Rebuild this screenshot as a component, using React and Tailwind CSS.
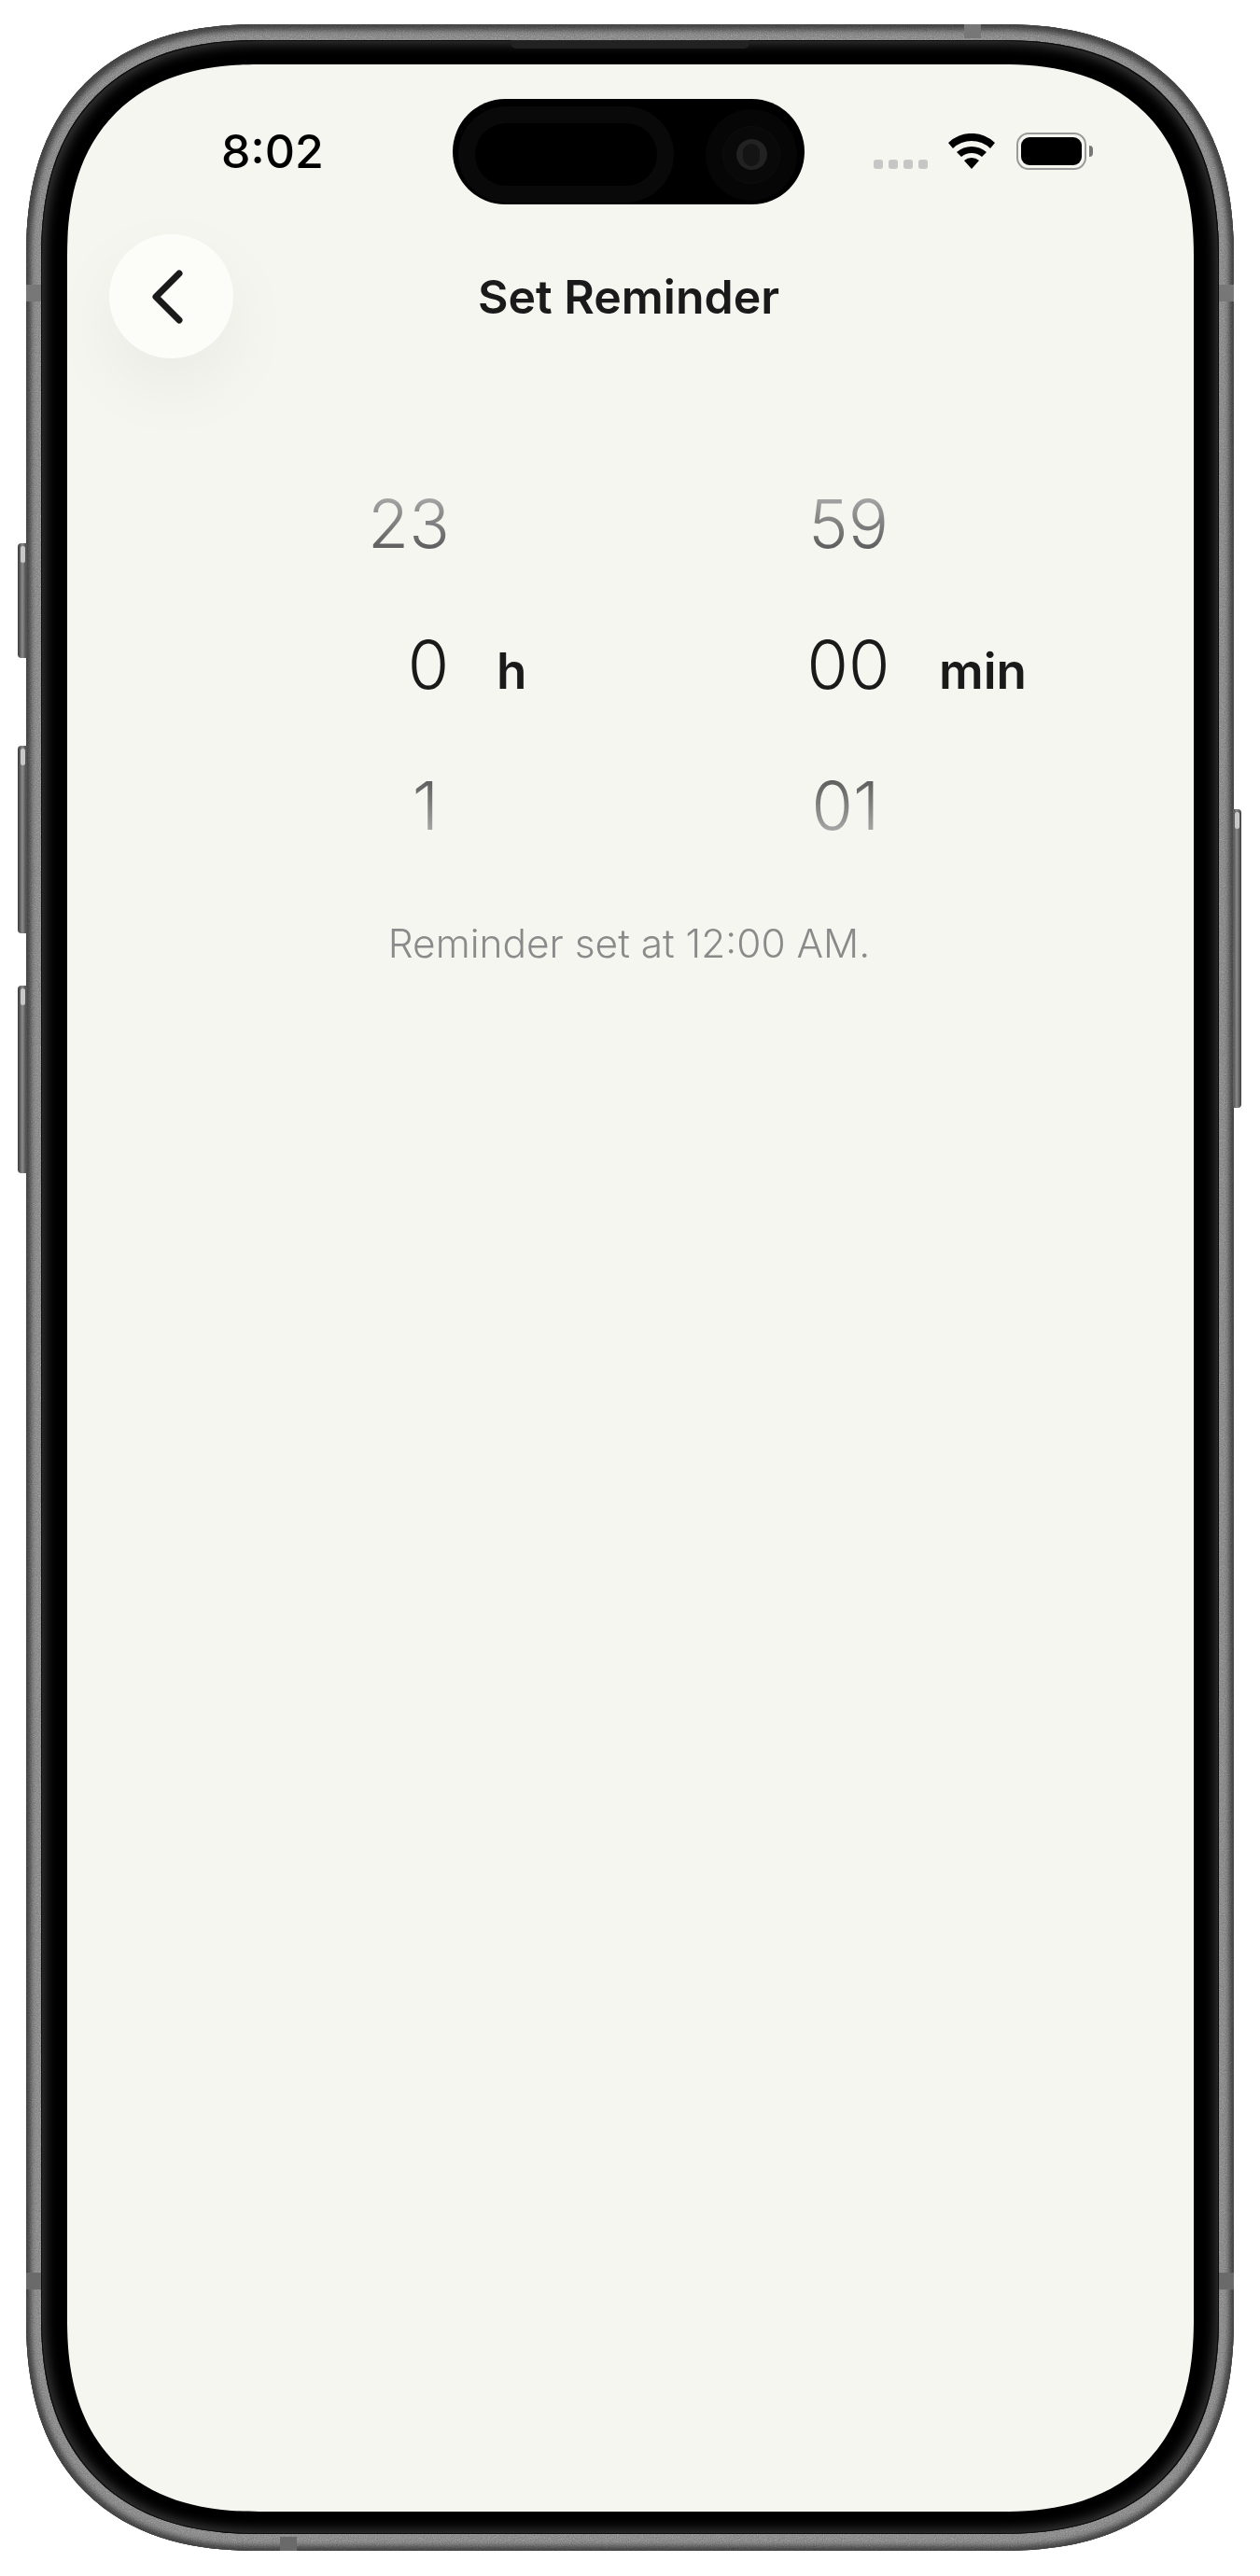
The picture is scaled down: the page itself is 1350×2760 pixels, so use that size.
const hours = [
  { value: '23', fade: 'from-[#bcbcbc] to-[#4a4a4a]', shift: '-ml-[21px]' },
  { value: '0', fade: 'from-[#1a1a1a] to-[#1a1a1a]', unit: 'h' },
  { value: '1', fade: 'from-[#4a4a4a] to-[#bcbcbc]', shift: '-ml-[3px]' },
]

const minutes = [
  { value: '59', fade: 'from-[#bcbcbc] to-[#4a4a4a]' },
  { value: '00', fade: 'from-[#1a1a1a] to-[#1a1a1a]', unit: 'min' },
  { value: '01', fade: 'from-[#4a4a4a] to-[#bcbcbc]', shift: '-ml-[3px]' },
]

function Wheel({ rows, width }) {
  return (
    <div className={width}>
      {rows.map((row) => (
        <div key={row.value} className="flex h-[151px] items-baseline">
          <span className={`block w-full shrink-0 text-center ${row.shift || ''}`}>
            <span className={`bg-linear-to-b bg-clip-text text-[72px] leading-[151px] font-light text-transparent ${row.fade}`}>
              {row.value}
            </span>
          </span>
          {row.unit && <span className={`text-[53px] font-semibold text-[#1a1a1a] ${row.unit === 'h' ? 'ml-[18px]' : 'ml-[42px]'}`}>{row.unit}</span>}
        </div>
      ))}
    </div>
  )
}

function SideButton({ className }) {
  return (
    <div className={`absolute w-[10px] overflow-hidden bg-linear-to-r from-[#3a3a3a] via-[#8c8c8c] to-[#3f3f3f] ${className}`}>
      <div className="mx-auto mt-[3px] h-[18px] w-[5px] rounded-full bg-[#c8c8c8]" />
    </div>
  )
}

function StatusBar() {
  return (
    <div className="flex h-[182px] items-start pt-[37px]">
      <span className="mt-[31px] ml-[165px] w-[248px] text-[50px] leading-[50px] font-[550] text-black">8:02</span>
      <div className="flex h-[113px] w-[377px] items-center rounded-full bg-black pl-[6px]">
        <div className="mt-[6px] flex h-[103px] w-[231px] items-center justify-center rounded-full bg-[#090909]">
          <div className="h-[67px] w-[195px] rounded-full bg-black" />
        </div>
        <div className="mt-[6px] ml-[34px] flex h-[98px] w-[98px] items-center justify-center rounded-full bg-[#060606]">
          <div className="flex h-[62px] w-[62px] items-center justify-center rounded-full border border-[#0e0e0e] bg-[#090909]">
            <div className="flex h-[33px] w-[33px] items-center justify-center rounded-full bg-[#222222]">
              <div className="h-[24px] w-[18px] rounded-full bg-[#141414]" />
            </div>
          </div>
        </div>
      </div>
      <div className="mt-[65px] ml-[74px] flex gap-[6px]">
        <div className="h-[10px] w-[10px] rounded-[3px] bg-[#c6c6c6]" />
        <div className="h-[10px] w-[10px] rounded-[3px] bg-[#c6c6c6]" />
        <div className="h-[10px] w-[10px] rounded-[3px] bg-[#c6c6c6]" />
        <div className="h-[10px] w-[10px] rounded-[3px] bg-[#c6c6c6]" />
      </div>
      <svg className="mt-[37px] ml-[22px]" width="50" height="38" viewBox="0 0 50 38" fill="black">
        <path d="M0 10A36 36 0 0 1 50 10L45 16A29 29 0 0 0 5 16Z" />
        <path d="M9 20A24 24 0 0 1 41 20L36 25A17 17 0 0 0 14 25Z" />
        <path d="M17 29A12 12 0 0 1 33 29L25 38Z" />
      </svg>
      <div className="mt-[36px] ml-[23px] flex items-center">
        <div className="h-[40px] w-[75px] rounded-[13px] border-[2.5px] border-[#9a9a9a] p-[3px]">
          <div className="h-full w-full rounded-[9px] bg-black" />
        </div>
        <div className="ml-[3px] h-[12px] w-[4px] rounded-r-full bg-[#777777]" />
      </div>
    </div>
  )
}

export default function App() {
  return (
    <div className="h-[2760px] w-[1350px] bg-white pt-[26px] pl-[28px] font-[Inter,sans-serif]">
      <div className="relative h-[2707px] w-[1294px] rounded-[250px] bg-[#7a7a7a] pt-[17px] pr-[16px] pb-[18px] pl-[16px] shadow-[inset_0_0_0_1px_#3c3c3c,inset_0_2px_6px_4px_#3a3a3a,inset_0_-2px_6px_3px_#444444] [corner-shape:superellipse(1.25)]">
        <SideButton className="top-[556px] left-[-9px] h-[123px] rounded-l-[4px]" />
        <SideButton className="top-[773px] left-[-9px] h-[201px] rounded-l-[4px]" />
        <SideButton className="top-[1030px] left-[-9px] h-[201px] rounded-l-[4px]" />
        <SideButton className="top-[841px] right-[-8px] h-[320px] rounded-r-[4px]" />

        {/* metal grain */}
        <svg className="absolute inset-0 h-full w-full rounded-[250px] opacity-70 mix-blend-overlay [corner-shape:superellipse(1.25)]">
          <filter id="grain">
            <feTurbulence type="fractalNoise" baseFrequency="0.9" numOctaves="2" />
            <feColorMatrix type="saturate" values="0" />
          </filter>
          <rect width="100%" height="100%" filter="url(#grain)" />
        </svg>

        {/* antenna bands */}
        <div className="absolute top-[279px] left-0 h-[18px] w-[16px] bg-[#777777]" />
        <div className="absolute top-[279px] right-0 h-[18px] w-[16px] bg-[#777777]" />
        <div className="absolute top-[2409px] left-0 h-[18px] w-[16px] bg-[#6a6a6a]" />
        <div className="absolute top-[2409px] right-0 h-[18px] w-[16px] bg-[#6a6a6a]" />
        <div className="absolute top-0 left-[1005px] h-[15px] w-[18px] bg-[#777777]" />
        <div className="absolute bottom-0 left-[272px] h-[15px] w-[18px] bg-[#6a6a6a]" />

        <div className="relative h-full w-full rounded-[234px] bg-black pt-[26px] pr-[27px] pb-[24px] pl-[28px] shadow-[inset_0_0_0_1px_#0c0c0c,inset_0_0_12px_5px_#333333] [corner-shape:superellipse(1.25)]">
          {/* earpiece */}
          <div className="absolute top-0 left-[503px] h-[9px] w-[256px] rounded-b-[6px] bg-[#222222]" />

          <div className="h-full w-full overflow-hidden rounded-[206px] bg-[#f5f6f0] [corner-shape:superellipse(1.25)]">
            <StatusBar />

            <div className="grid grid-cols-[1fr_auto_1fr] items-center pl-[45px]">
              <div>
                <button className="flex h-[133px] w-[133px] items-center justify-center rounded-full bg-[#fcfdf8] shadow-[0_30px_80px_rgba(0,0,0,0.05)]">
                  <svg className="mr-[8px]" width="40" height="60" viewBox="0 0 40 60" fill="none" stroke="#1a1a1a" strokeWidth="7" strokeLinecap="round" strokeLinejoin="round">
                    <path d="M32 5L7 30L32 55" />
                  </svg>
                </button>
              </div>
              <h1 className="pr-[49px] text-[50px] leading-[60px] font-semibold text-[#1a1a1a]">Set Reminder</h1>
              <div />
            </div>

            <div className="mt-[101px] flex">
              <Wheel rows={hours} width="ml-[332px] w-[110px]" />
              <Wheel rows={minutes} width="ml-[340px] w-[110px]" />
            </div>

            <p className="mt-[48px] pr-[3px] text-center text-[42.4px] leading-[50px] font-light text-[#8a8a8a]">Reminder set at 12:00 AM.</p>
          </div>
        </div>
      </div>
    </div>
  )
}
